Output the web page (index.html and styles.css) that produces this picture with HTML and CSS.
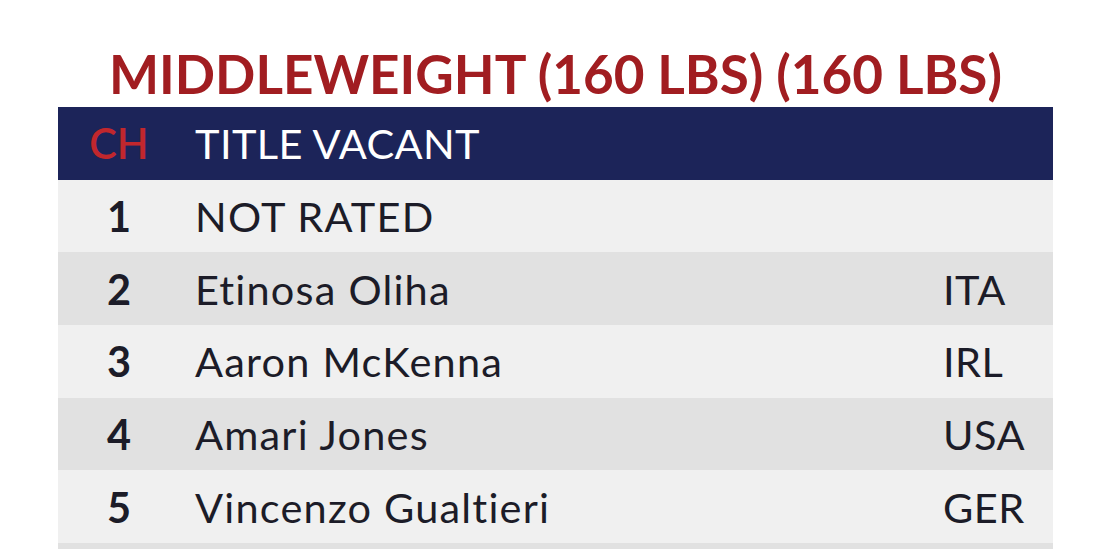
FILE: index.html
```html
<!DOCTYPE html>
<html lang="en">
<head>
  <meta charset="UTF-8" />
  <title>Middleweight Ratings</title>
  <link rel="stylesheet" href="styles.css">
</head>
<body>

<section class="division">
  <h2 class="division-title">MIDDLEWEIGHT (160 LBS) (160 LBS)</h2>

  <div class="ratings">
    <div class="row champ">
      <span class="rank">CH</span>
      <span class="name">TITLE VACANT</span>
      <span class="country"></span>
    </div>
    <div class="row">
      <span class="rank">1</span>
      <span class="name">NOT RATED</span>
      <span class="country"></span>
    </div>
    <div class="row">
      <span class="rank">2</span>
      <span class="name">Etinosa Oliha</span>
      <span class="country">ITA</span>
    </div>
    <div class="row">
      <span class="rank">3</span>
      <span class="name">Aaron McKenna</span>
      <span class="country">IRL</span>
    </div>
    <div class="row">
      <span class="rank">4</span>
      <span class="name">Amari Jones</span>
      <span class="country">USA</span>
    </div>
    <div class="row">
      <span class="rank">5</span>
      <span class="name">Vincenzo Gualtieri</span>
      <span class="country">GER</span>
    </div>
    <!-- rangée suivante, coupée par le bas de l'écran -->
    <div class="row"></div>
  </div>
</section>

</body>
</html>
```

FILE: styles.css
```css
* { margin: 0; padding: 0; box-sizing: border-box; }
body {
  font-family: Lato, "Liberation Sans", sans-serif;
  background: #fff;
  color: #1c1c28;
  overflow: hidden;
}

.division {
  width: 995px;
  margin: 41px 0 0 58px;
}

.division-title {
  text-align: center;
  color: #a11d21;
  font-size: 53px;
  font-weight: 700;
  line-height: 66px;
}

.ratings {
  display: flex;
  flex-direction: column;
}

.row {
  display: grid;
  grid-template-columns: 122px 1fr 110px;
  align-items: center;
  height: 72.7px;
  font-size: 41.5px;
  letter-spacing: 1.2px;
  background: #f0f0f0;
}
.row:nth-child(odd) {
  background: #e1e1e1;
}

.rank {
  text-align: center;
  font-weight: 700;
  letter-spacing: 0;
}
.name {
  padding-left: 15px;
}
.country {
  letter-spacing: 0.5px;
}

/* bandeau du champion */
.row.champ {
  background: #1c2459;
  color: #fff;
  letter-spacing: 0.4px;
}
.row.champ .rank {
  color: #c1272d;
  font-weight: 600;
}
```
